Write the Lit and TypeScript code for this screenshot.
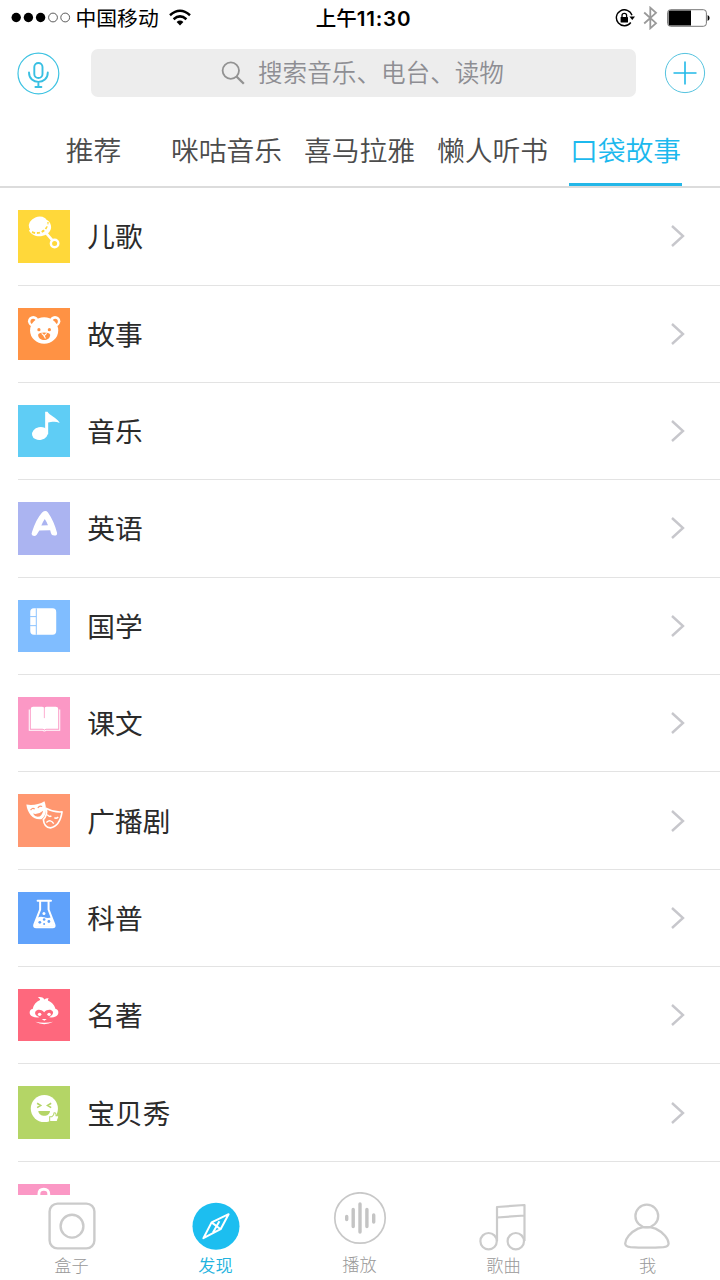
import { LitElement, html, svg, css } from "lit";
import { customElement } from "lit/decorators.js";

const rattle = svg`
  <path d="M28 23 34 30" stroke="#fff" stroke-width="2.6"/>
  <circle cx="36.4" cy="33.3" r="3.7" fill="none" stroke="#fff" stroke-width="2.4"/>
  <path d="M11 20.5C15 29 29.5 27.5 32.5 19.5C34 15.5 31 10 27.5 9.5L13 18Z" fill="#fff"/>
  <path d="M14 21.8C22 24.8 29 20 29.3 12" fill="none" stroke="#ffd83a" stroke-width="2.4" stroke-dasharray="3 1.8"/>
  <ellipse cx="20" cy="14.2" rx="9.6" ry="7.4" transform="rotate(-22 20 14.2)" fill="#fff"/>`;

const bear = svg`
  <circle cx="15.2" cy="13.2" r="5.3" fill="#fff"/><circle cx="36.8" cy="13.2" r="5.3" fill="#fff"/>
  <circle cx="15" cy="13.3" r="2.6" fill="#ff9244"/><circle cx="37" cy="13.3" r="2.6" fill="#ff9244"/>
  <ellipse cx="26" cy="22.3" rx="14" ry="13.2" fill="#fff"/>
  <circle cx="20.8" cy="21.6" r="1.6" fill="#ff9244"/><circle cx="31.2" cy="21.6" r="1.6" fill="#ff9244"/>
  <path d="M20 26.5C20.5 23.8 31.5 23.8 32 26.5C32 33.5 20 33.5 20 26.5Z" fill="#ff9244"/>
  <path d="M23.5 25.2 26 27.6 28.5 25.2M26 27.5 27.3 30.4M26 27.5V28.5" fill="none" stroke="#fff" stroke-width="1.1"/>`;

const note = svg`
  <ellipse cx="21.9" cy="28.3" rx="8" ry="6.4" transform="rotate(-12 21.9 28.3)" fill="#fff"/>
  <path d="M27 6.6H29.4C31 10.5 38 11.5 41.5 17.8C37.5 16 33 16.8 30 17.5V29H27Z" fill="#fff"/>`;

const letterMark = svg`
  <path fill-rule="evenodd" d="M24 10.4Q27.5 7.6 29.8 10.4Q35.8 19 38.8 30.5Q39.4 33.4 36 33.4Q33.2 33.2 32.8 31L32 28L21.2 28.4L18.6 32.6Q16.8 34.6 14.4 33.4Q12.8 32 14 29.6Q18 17 24 10.4ZM26.6 16.8Q24.4 20 23.2 23.4L29.8 23Q28.8 20 26.6 16.8Z" fill="#fff"/>`;

const notebook = svg`
  <rect x="12.2" y="8.3" width="25.8" height="26.2" rx="3.6" fill="#fff"/>
  <path d="M18.2 8.3V34.5M12 16.5H18M12 25.5H18" stroke="#80bdff" stroke-width=".9" fill="none"/>`;

const book = svg`
  <path d="M11.2 12.5V33H24.5Q26.2 34.8 28 33H41.5V12.5" fill="none" stroke="#fff" stroke-width="1"/>
  <path d="M12.7 12Q12.7 9.8 15 9.8H24Q26.1 9.8 26.2 11.5Q26.3 9.8 28.4 9.8H37.5Q40 9.8 40 12V31.6H28Q26.2 31.9 26.2 32.8Q26.2 31.9 24.4 31.6H12.7Z" fill="#fff"/>
  <path d="M26.2 10.5V21" stroke="#fb98c5" stroke-width=".8"/>`;

const masks = svg`
  <path d="M8.3 10.5C14.5 11.4 21 10.5 26.3 7.2C28.7 14 28.8 21.5 23.2 25C15.8 26.3 9.5 20 8.3 10.5Z" fill="#fff"/>
  <path d="M12.5 16Q14.2 13.3 16.6 14.9M19.7 14Q21.3 11.1 24 12.5" fill="none" stroke="#ff9770" stroke-width="1.1"/>
  <path d="M14.8 19.5Q20.5 20.7 25 16.7Q23.8 22.7 19.5 22.7Q16.4 22.5 14.8 19.5Z" fill="#ff9770"/>
  <path d="M28.2 14.3C33.5 17.3 38.5 18.3 43.8 17.8C42.5 26 38.8 32.7 32.2 33.7C27.2 33.3 25.5 28.5 25.2 25.5C28.5 22 29 18.5 28.2 14.3Z" fill="none" stroke="#fff" stroke-width="1.6" stroke-linejoin="round"/>
  <path d="M29 20.5Q31 23.2 33.2 21.8M36.2 23.5Q38 25 40 22.8M28.2 28.3Q32.5 24.5 35.5 29.4" fill="none" stroke="#fff" stroke-width="1.4"/>`;

const flask = svg`
  <path d="M19.5 8.8H32.8M22 9.5V17.5L16.2 32.5Q15.5 35 18 35H34.5Q37 35 36.2 32.5L30.4 17.5V9.5" fill="none" stroke="#fff" stroke-width="2" stroke-linecap="round" stroke-linejoin="round"/>
  <path d="M19.2 25.5Q22.5 23.8 26 25.2Q30 26.5 33.2 25L36.3 34.5H16.2Z" fill="#fff"/>
  <circle cx="25.8" cy="21.4" r="1.5" fill="#fff"/>
  <g fill="#60a2fb"><circle cx="26" cy="27.4" r="1.3"/><circle cx="21.7" cy="30.2" r="1.4"/><circle cx="30.7" cy="29.3" r="1.4"/><circle cx="26" cy="31.7" r="1"/></g>`;

const monkey = svg`
  <path d="M22 11C22 9.5 20.8 9 19.7 8.2C22.5 7.6 25 8.3 26.2 10.4C27.5 9.3 29 8.9 30.7 9.2C29.8 10 29.7 10.5 30 11.6C34.8 13.7 36.7 17 37.3 20C40.8 20.4 41.4 25.8 37.4 27.4Q35 28.6 31 28.2Q36 25 34.6 22.4C32.8 19.8 29 20 26 23C23 20 19.2 19.8 17.4 22.4C16 25 18.5 27 21.5 28.2Q17 28.6 14.4 27.4C10.3 25.8 11 20.4 14.6 20C15.4 15.6 18 12.4 22 11Z" fill="#fff"/>
  <circle cx="21.5" cy="25.2" r="1.7" fill="#fff"/><circle cx="30.9" cy="25.2" r="1.7" fill="#fff"/>
  <path d="M23.6 29.8H28.6L26.1 31.6Z" fill="#fff"/>
  <path d="M17.2 32.6Q26 34.4 35 32.6Q26 37.5 17.2 32.6Z" fill="#fff"/>`;

const smiley = svg`
  <circle cx="26.2" cy="22.4" r="13.5" fill="#fff"/>
  <path d="M19 17.2 22.5 19.4 19 21.5M33 17.2 29.4 19.4 33 21.5" fill="none" stroke="#b4d566" stroke-width="1.6"/>
  <path d="M20.2 24.8H31.8C31.5 31.2 20.8 31.2 20.2 24.8Z" fill="#b4d566"/>
  <path d="M31.5 30.5H33.8Q36 29 35.8 26.8Q38 26 37.8 29.5H39.8Q41 30 40.3 31.3L38.8 35.4H31.5Z" fill="#fff" stroke="#b4d566" stroke-width="1"/>`;

const lock = svg`
  <path d="M20.8 16V10Q20.8 5.2 25.7 5.2T30.6 10V16" fill="none" stroke="#fff" stroke-width="2.8"/>
  <rect x="15" y="15" width="22" height="19" rx="3" fill="#fff"/>`;

const ROWS = [
  { label: "儿歌", tone: "yellow", icon: rattle },
  { label: "故事", tone: "orange", icon: bear },
  { label: "音乐", tone: "cyan", icon: note },
  { label: "英语", tone: "violet", icon: letterMark },
  { label: "国学", tone: "sky", icon: notebook },
  { label: "课文", tone: "pink", icon: book },
  { label: "广播剧", tone: "coral", icon: masks },
  { label: "科普", tone: "blue", icon: flask },
  { label: "名著", tone: "red", icon: monkey },
  { label: "宝贝秀", tone: "green", icon: smiley },
  { label: "", tone: "pink", icon: lock },
];

const TABS = ["推荐", "咪咕音乐", "喜马拉雅", "懒人听书", "口袋故事"];

const NAV = [
  { label: "盒子", icon: svg`
    <rect x="5.6" y="9.6" width="44.8" height="44.8" rx="8" fill="none" stroke="#cbcbcb" stroke-width="2.4"/>
    <circle cx="28" cy="32.2" r="11.4" fill="none" stroke="#cbcbcb" stroke-width="2.4"/>` },
  { label: "发现", active: true, icon: svg`
    <circle cx="28" cy="32.2" r="23.5" fill="#1cbef0"/>
    <path d="M40.6 20.2 32.6 35.2 15.4 44.2 23.6 28.4ZM23.6 28.4 32.6 35.2M31.4 27.2 25 38.5" fill="none" stroke="#fff" stroke-width="2" stroke-linejoin="round"/>` },
  { label: "播放", lifted: true, icon: svg`
    <circle cx="28" cy="26" r="25.2" fill="none" stroke="#c8c8c8" stroke-width="1.7"/>
    <path d="M14.7 24.5V27.5M21.2 17.5V34.5M28 12V40M34.9 17.5V34.5M41.7 23V30" stroke="#c4c4c4" stroke-width="3.4" stroke-linecap="round"/>` },
  { label: "歌曲", icon: svg`
    <path d="M21 47V13L48.5 11V47M21 23.5 48.5 21.5" fill="none" stroke="#cbcbcb" stroke-width="2.2" stroke-linejoin="round"/>
    <circle cx="12.6" cy="47.2" r="8.2" fill="none" stroke="#cbcbcb" stroke-width="2.2"/>
    <circle cx="39.8" cy="47.2" r="8.2" fill="none" stroke="#cbcbcb" stroke-width="2.2"/>` },
  { label: "我", icon: svg`
    <circle cx="26.8" cy="22" r="11.4" fill="none" stroke="#cbcbcb" stroke-width="2.3"/>
    <path d="M18 34.6Q26.5 31.6 35.6 34.6C43.5 38.5 48.5 44.5 48.6 49.5Q48.5 52.6 43.5 53.1Q27 54.2 10.5 53.1Q5.3 52.6 5.2 49.5C5.3 44.5 10 38.5 18 34.6Z" fill="none" stroke="#cbcbcb" stroke-width="2.3"/>` },
];

@customElement("app-root")
export class AppRoot extends LitElement {
  static styles = css`
    :host {
      display: flex;
      flex-direction: column;
      width: 720px;
      height: 1280px;
      overflow: hidden;
      background: #fff;
      font-family: "Noto Sans CJK SC", sans-serif;
      color: #2b2b2b;
    }
    * { box-sizing: border-box; }
    svg { display: block; flex: none; }
    .status {
      display: grid;
      grid-template-columns: 1fr auto 1fr;
      align-items: center;
      height: 36px;
      padding: 0 10px 0 11px;
      color: #000;
      font-size: 20.8px;
      line-height: 34px;
    }
    .carrier { display: flex; align-items: center; gap: 4.5px; }
    .carrier span, .clock { height: 36px; }
    .carrier svg { margin-top: -2px; }
    .carrier svg:last-child { margin: -2px 0 0 6px; }
    .clock { padding-left: 6px; font-weight: 500; font-size: 20.5px; white-space: nowrap; }
    .clock .digits { font-family: Inter, sans-serif; font-weight: 600; font-size: 20.6px; letter-spacing: 0.8px; }
    .indicators { display: flex; align-items: center; justify-content: flex-end; }
    .indicators svg { margin: 0 0 0 9px; }
    .indicators svg:first-child { margin-right: -1px; }
    .search-row {
      display: flex;
      align-items: center;
      height: 74px;
      padding: 0 14px 0 17px;
    }
    .search {
      display: flex;
      align-items: center;
      justify-content: center;
      gap: 13px;
      width: 545px;
      height: 48px;
      margin: 0 28px 0 31px;
      padding-right: 2px;
      border-radius: 7px;
      background: #ededed;
      color: #8e8e93;
      font-weight: 350;
      font-size: 24.6px;
      line-height: 45px;
    }
    .search span { height: 48px; }
    .tabs {
      display: grid;
      grid-template-columns: repeat(5, 133px);
      justify-content: center;
      height: 78px;
      padding-right: 1px;
      border-bottom: 2px solid #dcdcdc;
      font-size: 27.8px;
      font-weight: 350;
      color: #4c4c4c;
    }
    .tab { display: flex; justify-content: center; }
    .tab span {
      height: 76px;
      padding: 0 1px;
      line-height: 79px;
      white-space: nowrap;
    }
    .tab.active span { color: #1cb9ee; border-bottom: 3px solid #24b7e8; }
    .header { height: 188.2px; flex: none; }
    .list { flex: 1; min-height: 0; overflow: hidden; }
    .row {
      display: flex;
      align-items: center;
      height: 97.36px;
      margin-left: 17.5px;
      padding-right: 34px;
      border-bottom: 1px solid #e3e3e3;
    }
    .tile { width: 52.3px; height: 52.3px; flex: none; }
    .yellow { background: #ffd83a; }
    .orange { background: #ff9244; }
    .cyan { background: #5fcdf5; }
    .violet { background: #abb4f1; }
    .sky { background: #80bdff; }
    .pink { background: #fb98c5; }
    .coral { background: #ff9770; }
    .blue { background: #60a2fb; }
    .red { background: #fe687d; }
    .green { background: #b4d566; }
    .name { flex: 1; height: 40px; padding-left: 17.5px; font-size: 27.7px; line-height: 39px; }
    .nav {
      display: grid;
      grid-template-columns: repeat(5, 144px);
      flex: none;
      height: 85px;
      background: #fff;
      color: #999;
      font-size: 17.2px;
      font-weight: 300;
    }
    .item { display: flex; flex-direction: column; align-items: center; }
    .item svg { margin-top: -1px; }
    .item span { line-height: 22px; margin: 2px 1px 0 0; }
    .item.lifted svg { margin-top: -3px; }
    .item.lifted span { margin-top: 3px; }
    .item.active { color: #22b2de; font-weight: 350; }
  `;

  render() {
    return html`
      <div class="header">
        <div class="status">
          <div class="carrier">
            <svg width="60" height="12" viewBox="0 0 60 12">
              <g fill="#000"><circle cx="5.2" cy="6.5" r="4.7"/><circle cx="17.4" cy="6.5" r="4.7"/><circle cx="29.6" cy="6.5" r="4.7"/></g>
              <g fill="none" stroke="#333" stroke-width=".8"><circle cx="42" cy="6.5" r="4.4"/><circle cx="54.2" cy="6.5" r="4.4"/></g>
            </svg>
            <span>中国移动</span>
            <svg width="22" height="17" viewBox="0 0 22 17">
              <g fill="none" stroke="#000" stroke-width="2.5"><path d="M1 6.2Q11-2.6 21 6.2M4.6 10.2Q11 4.6 17.4 10.2"/></g>
              <path d="M7.6 13Q11 10.2 14.4 13L11 16.6Z"/>
            </svg>
          </div>
          <div class="clock">上午<span class="digits">11:30</span></div>
          <div class="indicators">
            <svg width="20" height="18" viewBox="0 0 20 18">
              <path d="M17 6.3A8 8 0 1 0 15.8 13.5" fill="none" stroke="#000" stroke-width="1.4"/>
              <path d="M14.4 7.6H20L17.3 11Z"/><rect x="5.6" y="8" width="7.4" height="5.6" rx=".6"/>
              <path d="M7 8.5V6.5Q7 4.4 9.3 4.4T11.6 6.5V8.5" fill="none" stroke="#000" stroke-width="1.3"/>
            </svg>
            <svg width="15" height="24" viewBox="0 0 15 24">
              <path d="M1.2 6.5 13 17.2 7.3 22.3V1.7L13 6.8 1.2 17.5" fill="none" stroke="#999" stroke-width="1.8"/>
            </svg>
            <svg width="43" height="18" viewBox="0 0 43 18">
              <rect x=".6" y=".7" width="38.8" height="16.6" rx="3" fill="none" stroke="#777" stroke-width="1"/>
              <path d="M3 1.5H24V16.5H3Q1.6 16.5 1.6 15V3Q1.6 1.5 3 1.5Z"/><path d="M40.6 6Q42.6 7 42.6 9T40.6 12Z"/>
            </svg>
          </div>
        </div>
        <div class="search-row">
          <svg width="43" height="43" viewBox="0 0 43 43">
            <circle cx="21.4" cy="21.5" r="20.4" fill="none" stroke="#3fc3e2" stroke-width="1.2"/>
            <g fill="none" stroke="#38bfe2" stroke-width="1.9" stroke-linecap="round">
              <rect x="17.3" y="11" width="8.2" height="15" rx="4.1"/>
              <path d="M12 20.5C12 33 30.8 33 30.8 20.5M21.4 30V34.8M18.4 35H24.4"/>
            </g>
          </svg>
          <div class="search">
            <svg width="24" height="24" viewBox="0 0 24 24" fill="none" stroke="#929292" stroke-width="1.8">
              <circle cx="9.8" cy="9.6" r="8.2"/><path d="M15.5 15.5 22.8 22.8" stroke-width="2.3"/>
            </svg>
            <span>搜索音乐、电台、读物</span>
          </div>
          <svg width="42" height="42" viewBox="0 0 42 42" fill="none">
            <circle cx="21" cy="21" r="19.6" stroke="#55c3df" stroke-width="1"/>
            <path d="M9.5 21H32.5M21 9.5V32.5" stroke="#20b9e8" stroke-width="1.6"/>
          </svg>
        </div>
        <div class="tabs">
          ${TABS.map((t, i) => html`<div class="tab ${i === 4 ? "active" : ""}"><span>${t}</span></div>`)}
        </div>
      </div>
      <div class="list">
        ${ROWS.map((r) => html`
          <div class="row">
            <svg class="tile ${r.tone}" viewBox="0 0 52 52">${r.icon}</svg>
            <div class="name">${r.label}</div>
            <svg width="16" height="24" viewBox="0 0 16 24"><path d="M2 2 13 12 2 22" fill="none" stroke="#c7c7cc" stroke-width="2.4"/></svg>
          </div>`)}
      </div>
      <div class="nav">
        ${NAV.map((n) => html`
          <div class="item ${n.active ? "active" : ""} ${n.lifted ? "lifted" : ""}">
            <svg width="56" height="58" viewBox="0 0 56 58">${n.icon}</svg>
            <span>${n.label}</span>
          </div>`)}
      </div>
    `;
  }
}
